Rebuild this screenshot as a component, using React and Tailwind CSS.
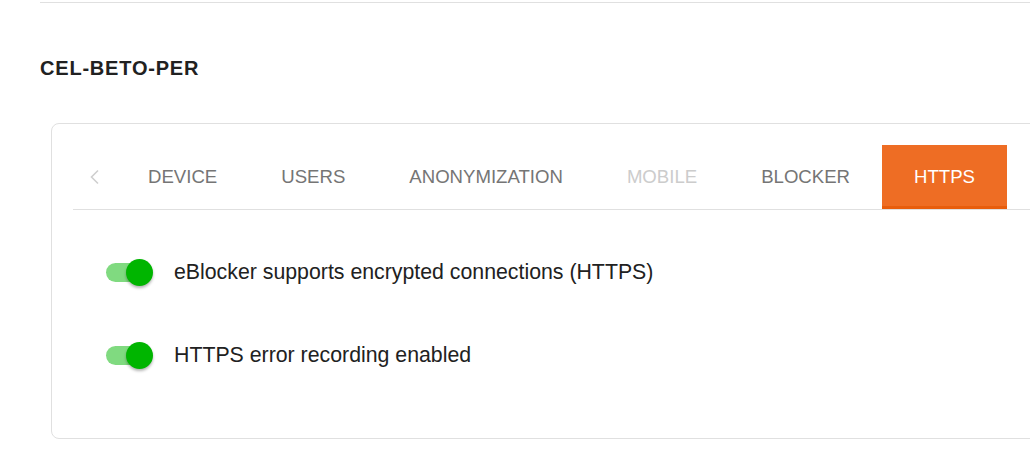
import React from 'react';

const tabs = [
  { label: 'DEVICE' },
  { label: 'USERS' },
  { label: 'ANONYMIZATION' },
  { label: 'MOBILE', disabled: true },
  { label: 'BLOCKER' },
  { label: 'HTTPS', active: true },
];

const settings = [
  'eBlocker supports encrypted connections (HTTPS)',
  'HTTPS error recording enabled',
];

function Toggle() {
  return (
    <div className="relative w-[47px] h-[27px] shrink-0">
      <div className="absolute left-0 top-[4px] w-[46px] h-[19px] rounded-full bg-[#80da80]" />
      <div className="absolute right-0 top-0 w-[27px] h-[27px] rounded-full bg-[#00b500] shadow-[0_2px_3px_rgba(0,0,0,0.3)]" />
    </div>
  );
}

export default function App() {
  return (
    <div className="w-[1030px] h-[455px] bg-white overflow-hidden font-['Liberation_Sans',Arial,sans-serif]">
      <div className="ml-[40px] mt-[2px] border-t border-[#e0e0e0]" />

      <h2 className="ml-[40px] mt-[54px] text-[20px] leading-[23px] font-bold tracking-[0.8px] text-[#212121]">
        CEL-BETO-PER
      </h2>

      <div className="ml-[51px] mt-[43px] w-[1010px] h-[316px] border border-[#e0e0e0] rounded-lg pt-[21px] pl-[21px]">
        {/* tab bar */}
        <div className="flex items-stretch border-b border-[#e0e0e0]">
          <div className="w-[43px] h-[64px] flex items-center justify-center">
            <svg width="11" height="16" viewBox="0 0 11 16" fill="none">
              <polyline points="9,1.5 2.5,8 9,14.5" stroke="#cfcfcf" strokeWidth="1.6" />
            </svg>
          </div>
          {tabs.map((t) => (
            <div
              key={t.label}
              className={`h-[64px] px-[32px] flex items-center text-[18.6px] ${
                t.active
                  ? 'bg-[#ee6d24] text-white border-b-[3px] border-[#e85d0c] pt-[3px]'
                  : t.disabled
                  ? 'text-[#cccccc]'
                  : 'text-[#757575]'
              }`}
            >
              {t.label}
            </div>
          ))}
        </div>

        {/* settings */}
        <div className="pl-[33px] pt-[41px] flex flex-col gap-[41px]">
          {settings.map((s) => (
            <div key={s} className="h-[42px] flex items-center gap-[21px]">
              <Toggle />
              <span className="pt-[2px] text-[21.3px] text-[#212121]">{s}</span>
            </div>
          ))}
        </div>
      </div>
    </div>
  );
}
